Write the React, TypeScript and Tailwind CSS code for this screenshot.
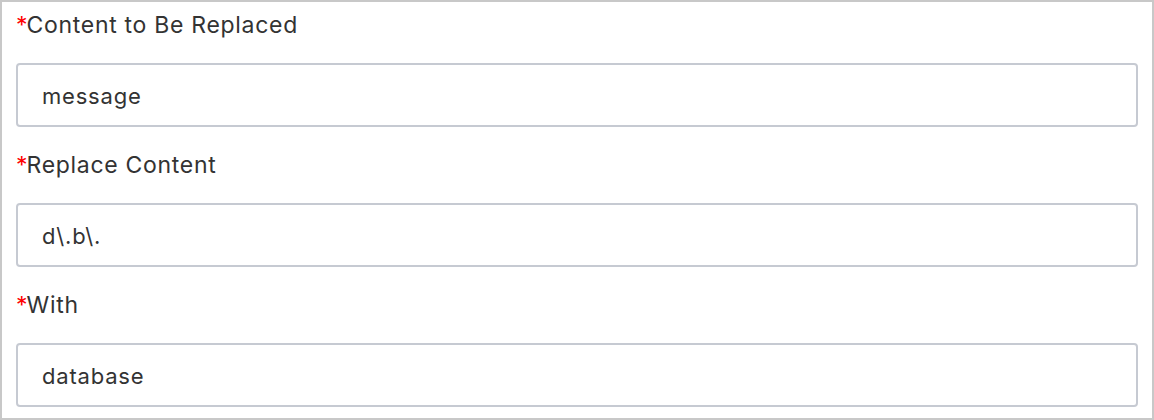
const fields = [
  { label: 'Content to Be Replaced', value: 'message' },
  { label: 'Replace Content', value: 'd\\.b\\.' },
  { label: 'With', value: 'database' },
]

export default function App() {
  return (
    <div
      className="w-[1154px] h-[420px] bg-white border-2 border-[#c8c8c8] px-[14px] text-[#333333]"
      style={{ fontFamily: 'Inter, "Noto Sans", sans-serif' }}
    >
      {fields.map((field) => (
        <div key={field.label} className="mb-[15px]">
          <div className="h-[47px] flex items-center text-[23px] leading-none">
            <span className="text-[#ff0000] tracking-normal">*</span>
            <span className="tracking-[0.7px] ml-[-1px]">{field.label}</span>
          </div>
          <div className="mt-[14px] h-[64px] border-2 border-[#c6cad2] rounded-[4px] flex items-center px-[24px] pt-[2px] text-[22px] tracking-[0.8px]">
            {field.value}
          </div>
        </div>
      ))}
    </div>
  )
}
